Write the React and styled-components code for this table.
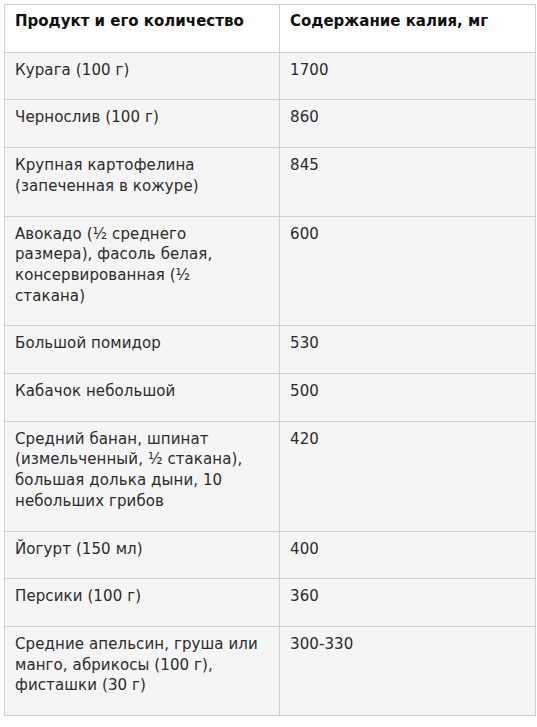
import React from 'react';
import styled, { createGlobalStyle } from 'styled-components';

const GlobalStyle = createGlobalStyle`
	html, body {
		margin: 0;
		padding: 0;
		background: #fff;
	}
	body {
		font-family: 'DejaVu Sans', 'Open Sans', sans-serif;
		color: #222;
	}
`;

const Wrapper = styled.div`
	padding: 4px 2px 0 4px;
`;

const Table = styled.table`
	width: 531px;
	border-collapse: collapse;
	table-layout: fixed;
	font-size: 15px;
	line-height: 20.7px;
`;

const Col = styled.col`
	width: ${(p) => p.$width}px;
`;

const HeadCell = styled.th`
	text-align: left;
	vertical-align: top;
	font-weight: 700;
	color: #111;
	padding: 6px 10px 20px 10px;
	border: 1px solid #cfcfcf;
	background: #fff;
`;

const Cell = styled.td`
	vertical-align: top;
	padding: 7px 10px 19px 10px;
	border: 1px solid #cfcfcf;
	background: #f5f5f5;
	color: #2b2b2b;
	letter-spacing: 0.1px;
`;

const rows = [
	[['Курага (100 г)'], '1700'],
	[['Чернослив (100 г)'], '860'],
	[['Крупная картофелина', '(запеченная в кожуре)'], '845'],
	[['Авокадо (½ среднего', 'размера), фасоль белая,', 'консервированная (½', 'стакана)'], '600'],
	[['Большой помидор'], '530'],
	[['Кабачок небольшой'], '500'],
	[['Средний банан, шпинат', '(измельченный, ½ стакана),', 'большая долька дыни, 10', 'небольших грибов'], '420'],
	[['Йогурт (150 мл)'], '400'],
	[['Персики (100 г)'], '360'],
	[['Средние апельсин, груша или', 'манго, абрикосы (100 г),', 'фисташки (30 г)'], '300-330'],
];

const Lines = ({ lines }) =>
	lines.map((line, i) => (
		<React.Fragment key={i}>
			{i > 0 && <br />}
			{line}
		</React.Fragment>
	));

const App = () => (
	<Wrapper>
		<GlobalStyle />
		<Table>
			<colgroup>
				<Col $width={275} />
				<Col $width={256} />
			</colgroup>
			<thead>
				<tr>
					<HeadCell>Продукт и его количество</HeadCell>
					<HeadCell>Содержание калия, мг</HeadCell>
				</tr>
			</thead>
			<tbody>
				{rows.map(([product, amount]) => (
					<tr key={product[0]}>
						<Cell>
							<Lines lines={product} />
						</Cell>
						<Cell>{amount}</Cell>
					</tr>
				))}
			</tbody>
		</Table>
	</Wrapper>
);

export default App;
